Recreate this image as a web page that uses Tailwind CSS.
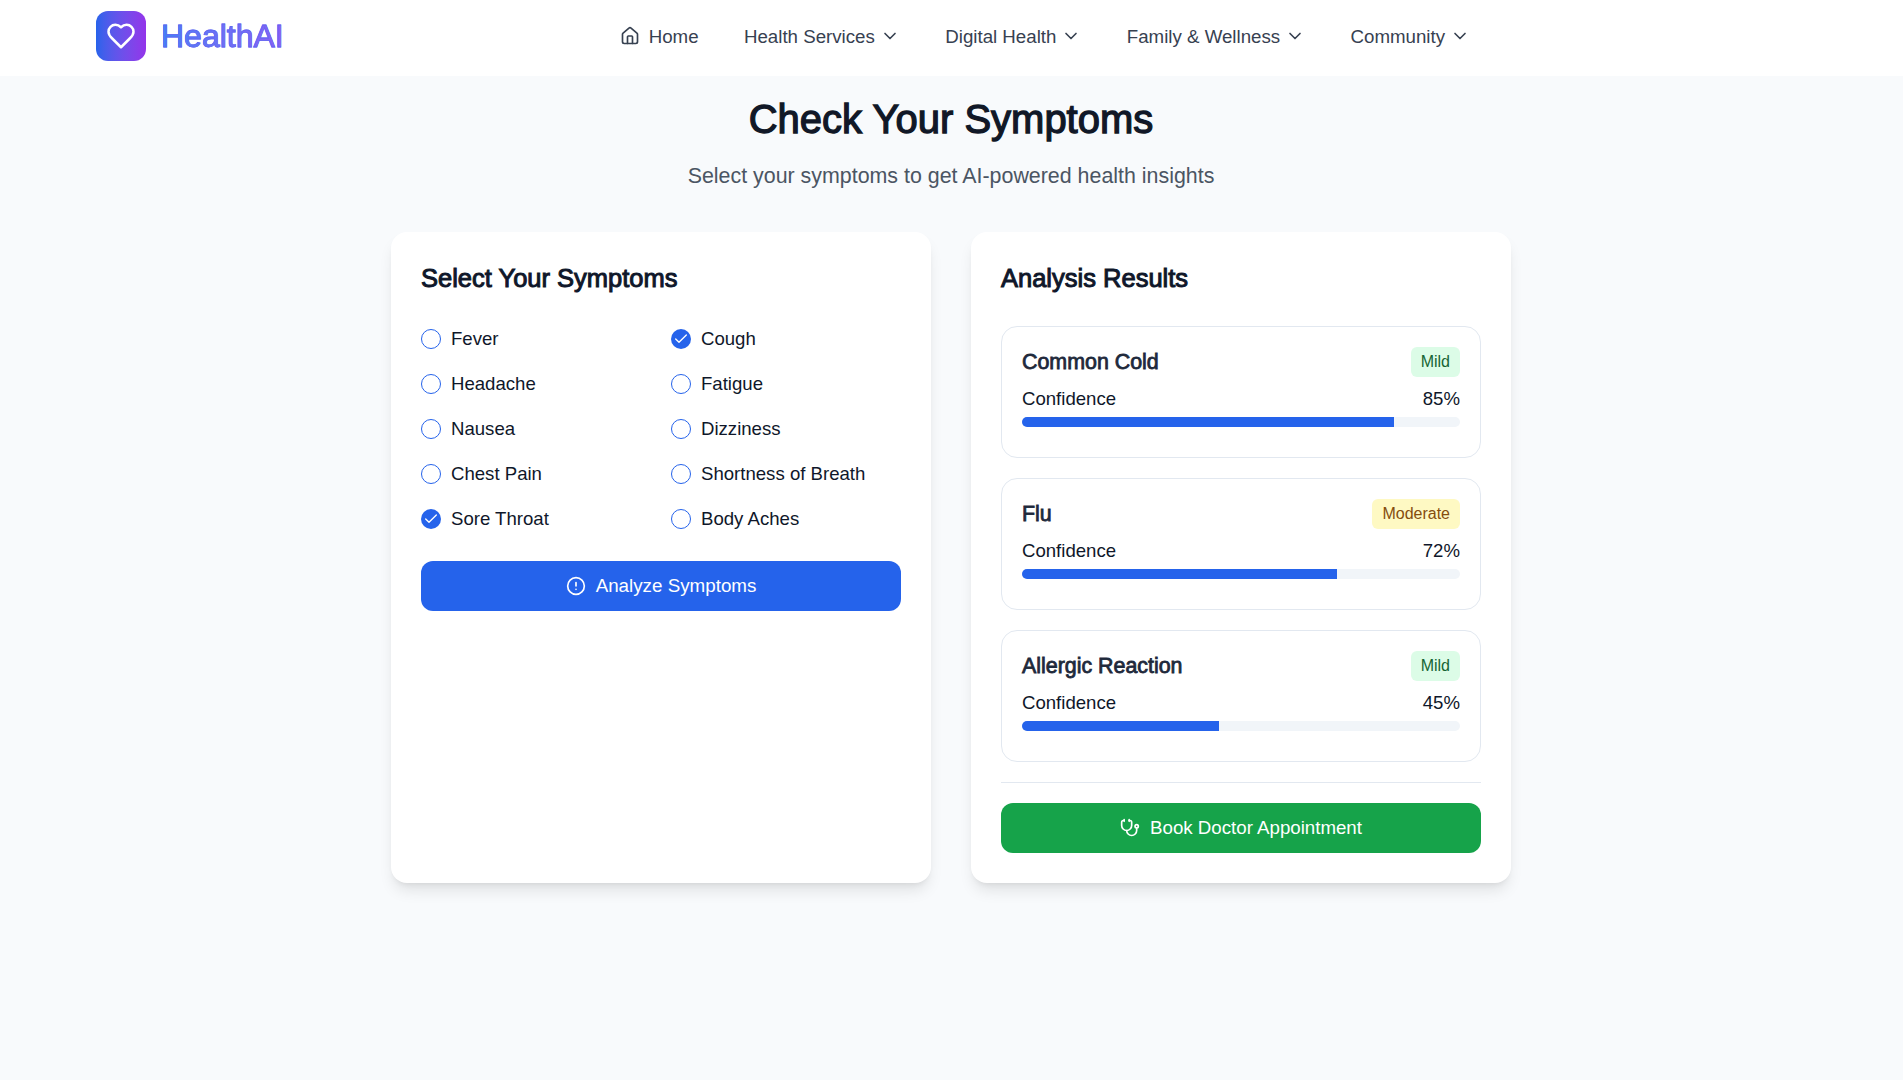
<!DOCTYPE html>
<html lang="en">
<head>
    <meta charset="UTF-8">
    <meta name="viewport" content="width=device-width, initial-scale=1.0">
    <title>HealthAI - Check Your Symptoms</title>
    <script src="https://cdn.jsdelivr.net/npm/@tailwindcss/browser@4"></script>
</head>
<body class="bg-[#f8fafc] min-h-screen font-['Liberation_Sans',Arial,sans-serif] text-[#0f172a]">
    <!-- Navbar -->
    <header class="bg-white h-[76px] pb-[4px] pl-[96px] flex items-center">
        <div class="w-[50px] h-[50px] rounded-xl bg-gradient-to-r from-[#2563eb] to-[#9333ea] flex items-center justify-center">
            <svg class="w-[30px] h-[30px]" viewBox="0 0 24 24" fill="none" stroke="white" stroke-width="2" stroke-linecap="round" stroke-linejoin="round"><path d="M19 14c1.49-1.46 3-3.21 3-5.5A5.5 5.5 0 0 0 16.5 3c-1.76 0-3 .5-4.5 2-1.5-1.5-2.74-2-4.5-2A5.5 5.5 0 0 0 2 8.5c0 2.3 1.5 4.05 3 5.5l7 7Z"/></svg>
        </div>
        <span class="ml-[15px] text-[32px] [-webkit-text-stroke:0.8px_#6366f1] bg-gradient-to-r from-[#3b82f6] to-[#8b5cf6] bg-clip-text text-transparent">HealthAI</span>
        <nav class="ml-[336px] mt-[2px] flex items-center gap-[45.4px] text-[18.7px] text-[#374151]">
            <a class="flex items-center gap-[9px]" href="#">
                <svg class="w-5 h-5 -mt-[2px]" viewBox="0 0 24 24" fill="none" stroke="currentColor" stroke-width="2" stroke-linecap="round" stroke-linejoin="round"><path d="M15 21v-8a1 1 0 0 0-1-1h-4a1 1 0 0 0-1 1v8"/><path d="M3 10a2 2 0 0 1 .709-1.528l7-5.999a2 2 0 0 1 2.582 0l7 5.999A2 2 0 0 1 21 10v9a2 2 0 0 1-2 2H5a2 2 0 0 1-2-2z"/></svg>
                Home
            </a>
            <a class="flex items-center gap-[5px]" href="#">Health Services
                <svg class="w-5 h-5 -mt-[1px]" viewBox="0 0 24 24" fill="none" stroke="currentColor" stroke-width="2" stroke-linecap="round" stroke-linejoin="round"><path d="m6 9 6 6 6-6"/></svg>
            </a>
            <a class="flex items-center gap-[5px]" href="#">Digital Health
                <svg class="w-5 h-5 -mt-[1px]" viewBox="0 0 24 24" fill="none" stroke="currentColor" stroke-width="2" stroke-linecap="round" stroke-linejoin="round"><path d="m6 9 6 6 6-6"/></svg>
            </a>
            <a class="flex items-center gap-[5px]" href="#">Family &amp; Wellness
                <svg class="w-5 h-5 -mt-[1px]" viewBox="0 0 24 24" fill="none" stroke="currentColor" stroke-width="2" stroke-linecap="round" stroke-linejoin="round"><path d="m6 9 6 6 6-6"/></svg>
            </a>
            <a class="flex items-center gap-[5px]" href="#">Community
                <svg class="w-5 h-5 -mt-[1px]" viewBox="0 0 24 24" fill="none" stroke="currentColor" stroke-width="2" stroke-linecap="round" stroke-linejoin="round"><path d="m6 9 6 6 6-6"/></svg>
            </a>
        </nav>
    </header>

    <main class="w-[1120px] ml-[391px]">
        <h1 class="text-center text-[40px] leading-[60px] [-webkit-text-stroke:1.3px_#111827] text-[#111827] pt-[13px]">Check Your Symptoms</h1>
        <p class="text-center text-[21.4px] leading-[30px] text-[#4b5563] mt-[12px]">Select your symptoms to get AI-powered health insights</p>

        <div class="grid grid-cols-2 gap-[40px] mt-[41px]">
            <!-- Symptoms -->
            <section class="bg-white rounded-2xl shadow-lg p-[30px] h-[651px]">
                <h2 class="text-[25.5px] leading-[32px] [-webkit-text-stroke:1px_#0f172a] text-[#0f172a]">Select Your Symptoms</h2>
                <div class="grid grid-cols-2 gap-x-[20px] gap-y-[18px] mt-[31px] text-[18.6px] leading-[27px]">
                    <label class="flex items-center gap-[10px]"><span class="w-5 h-5 rounded-full border border-[#2563eb]"></span>Fever</label>
                    <label class="flex items-center gap-[10px]"><span class="w-5 h-5 rounded-full bg-[#2563eb] flex items-center justify-center"><svg class="w-[16px] h-[16px]" viewBox="0 0 24 24" fill="none" stroke="white" stroke-width="2" stroke-linecap="round" stroke-linejoin="round"><path d="M20 6 9 17l-5-5"/></svg></span>Cough</label>
                    <label class="flex items-center gap-[10px]"><span class="w-5 h-5 rounded-full border border-[#2563eb]"></span>Headache</label>
                    <label class="flex items-center gap-[10px]"><span class="w-5 h-5 rounded-full border border-[#2563eb]"></span>Fatigue</label>
                    <label class="flex items-center gap-[10px]"><span class="w-5 h-5 rounded-full border border-[#2563eb]"></span>Nausea</label>
                    <label class="flex items-center gap-[10px]"><span class="w-5 h-5 rounded-full border border-[#2563eb]"></span>Dizziness</label>
                    <label class="flex items-center gap-[10px]"><span class="w-5 h-5 rounded-full border border-[#2563eb]"></span>Chest Pain</label>
                    <label class="flex items-center gap-[10px]"><span class="w-5 h-5 rounded-full border border-[#2563eb]"></span>Shortness of Breath</label>
                    <label class="flex items-center gap-[10px]"><span class="w-5 h-5 rounded-full bg-[#2563eb] flex items-center justify-center"><svg class="w-[16px] h-[16px]" viewBox="0 0 24 24" fill="none" stroke="white" stroke-width="2" stroke-linecap="round" stroke-linejoin="round"><path d="M20 6 9 17l-5-5"/></svg></span>Sore Throat</label>
                    <label class="flex items-center gap-[10px]"><span class="w-5 h-5 rounded-full border border-[#2563eb]"></span>Body Aches</label>
                </div>
                <button class="mt-[29px] w-full h-[50px] rounded-xl bg-[#2563eb] text-white text-[18.8px] flex items-center justify-center gap-[10px]">
                    <svg class="w-5 h-5" viewBox="0 0 24 24" fill="none" stroke="white" stroke-width="2" stroke-linecap="round" stroke-linejoin="round"><circle cx="12" cy="12" r="10"/><line x1="12" y1="8" x2="12" y2="12"/><line x1="12" y1="16" x2="12.01" y2="16"/></svg>
                    Analyze Symptoms
                </button>
            </section>

            <!-- Results -->
            <section class="bg-white rounded-2xl shadow-lg p-[30px] h-[651px]">
                <h2 class="text-[25.5px] leading-[32px] [-webkit-text-stroke:1px_#0f172a] text-[#0f172a]">Analysis Results</h2>
                <div class="flex flex-col gap-[20px] mt-[32px]">
                    <div class="border border-[#e2e8f0] rounded-2xl p-[20px] h-[132px]">
                        <div class="flex items-center justify-between h-[30px]">
                            <h3 class="text-[21.4px] [-webkit-text-stroke:0.8px_#1e293b] text-[#1e293b]">Common Cold</h3>
                            <span class="h-[30px] px-[10px] rounded-md bg-[#dcfce7] text-[#166534] text-[16px] leading-[30px]">Mild</span>
                        </div>
                        <div class="flex justify-between mt-[8px] text-[18.6px] leading-[27px]"><span>Confidence</span><span>85%</span></div>
                        <div class="h-[10px] rounded-full bg-[#f1f5f9] mt-[5px] overflow-hidden"><div class="h-full bg-[#2563eb]" style="width:85%"></div></div>
                    </div>
                    <div class="border border-[#e2e8f0] rounded-2xl p-[20px] h-[132px]">
                        <div class="flex items-center justify-between h-[30px]">
                            <h3 class="text-[21.4px] [-webkit-text-stroke:0.8px_#1e293b] text-[#1e293b]">Flu</h3>
                            <span class="h-[30px] px-[10px] rounded-md bg-[#fef9c3] text-[#854d0e] text-[16px] leading-[30px]">Moderate</span>
                        </div>
                        <div class="flex justify-between mt-[8px] text-[18.6px] leading-[27px]"><span>Confidence</span><span>72%</span></div>
                        <div class="h-[10px] rounded-full bg-[#f1f5f9] mt-[5px] overflow-hidden"><div class="h-full bg-[#2563eb]" style="width:72%"></div></div>
                    </div>
                    <div class="border border-[#e2e8f0] rounded-2xl p-[20px] h-[132px]">
                        <div class="flex items-center justify-between h-[30px]">
                            <h3 class="text-[21.4px] [-webkit-text-stroke:0.8px_#1e293b] text-[#1e293b]">Allergic Reaction</h3>
                            <span class="h-[30px] px-[10px] rounded-md bg-[#dcfce7] text-[#166534] text-[16px] leading-[30px]">Mild</span>
                        </div>
                        <div class="flex justify-between mt-[8px] text-[18.6px] leading-[27px]"><span>Confidence</span><span>45%</span></div>
                        <div class="h-[10px] rounded-full bg-[#f1f5f9] mt-[5px] overflow-hidden"><div class="h-full bg-[#2563eb]" style="width:45%"></div></div>
                    </div>
                </div>
                <div class="border-t border-[#e2e8f0] mt-[20px] pt-[20px]">
                    <button class="w-full h-[50px] rounded-xl bg-[#16a34a] text-white text-[18.7px] flex items-center justify-center gap-[10px]">
                        <svg class="w-5 h-5" viewBox="0 0 24 24" fill="none" stroke="white" stroke-width="2" stroke-linecap="round" stroke-linejoin="round"><path d="M11 2v2"/><path d="M5 2v2"/><path d="M5 3H4a2 2 0 0 0-2 2v4a6 6 0 0 0 12 0V5a2 2 0 0 0-2-2h-1"/><path d="M8 15a6 6 0 0 0 12 0v-3"/><circle cx="20" cy="10" r="2"/></svg>
                        Book Doctor Appointment
                    </button>
                </div>
            </section>
        </div>
    </main>
</body>
</html>
